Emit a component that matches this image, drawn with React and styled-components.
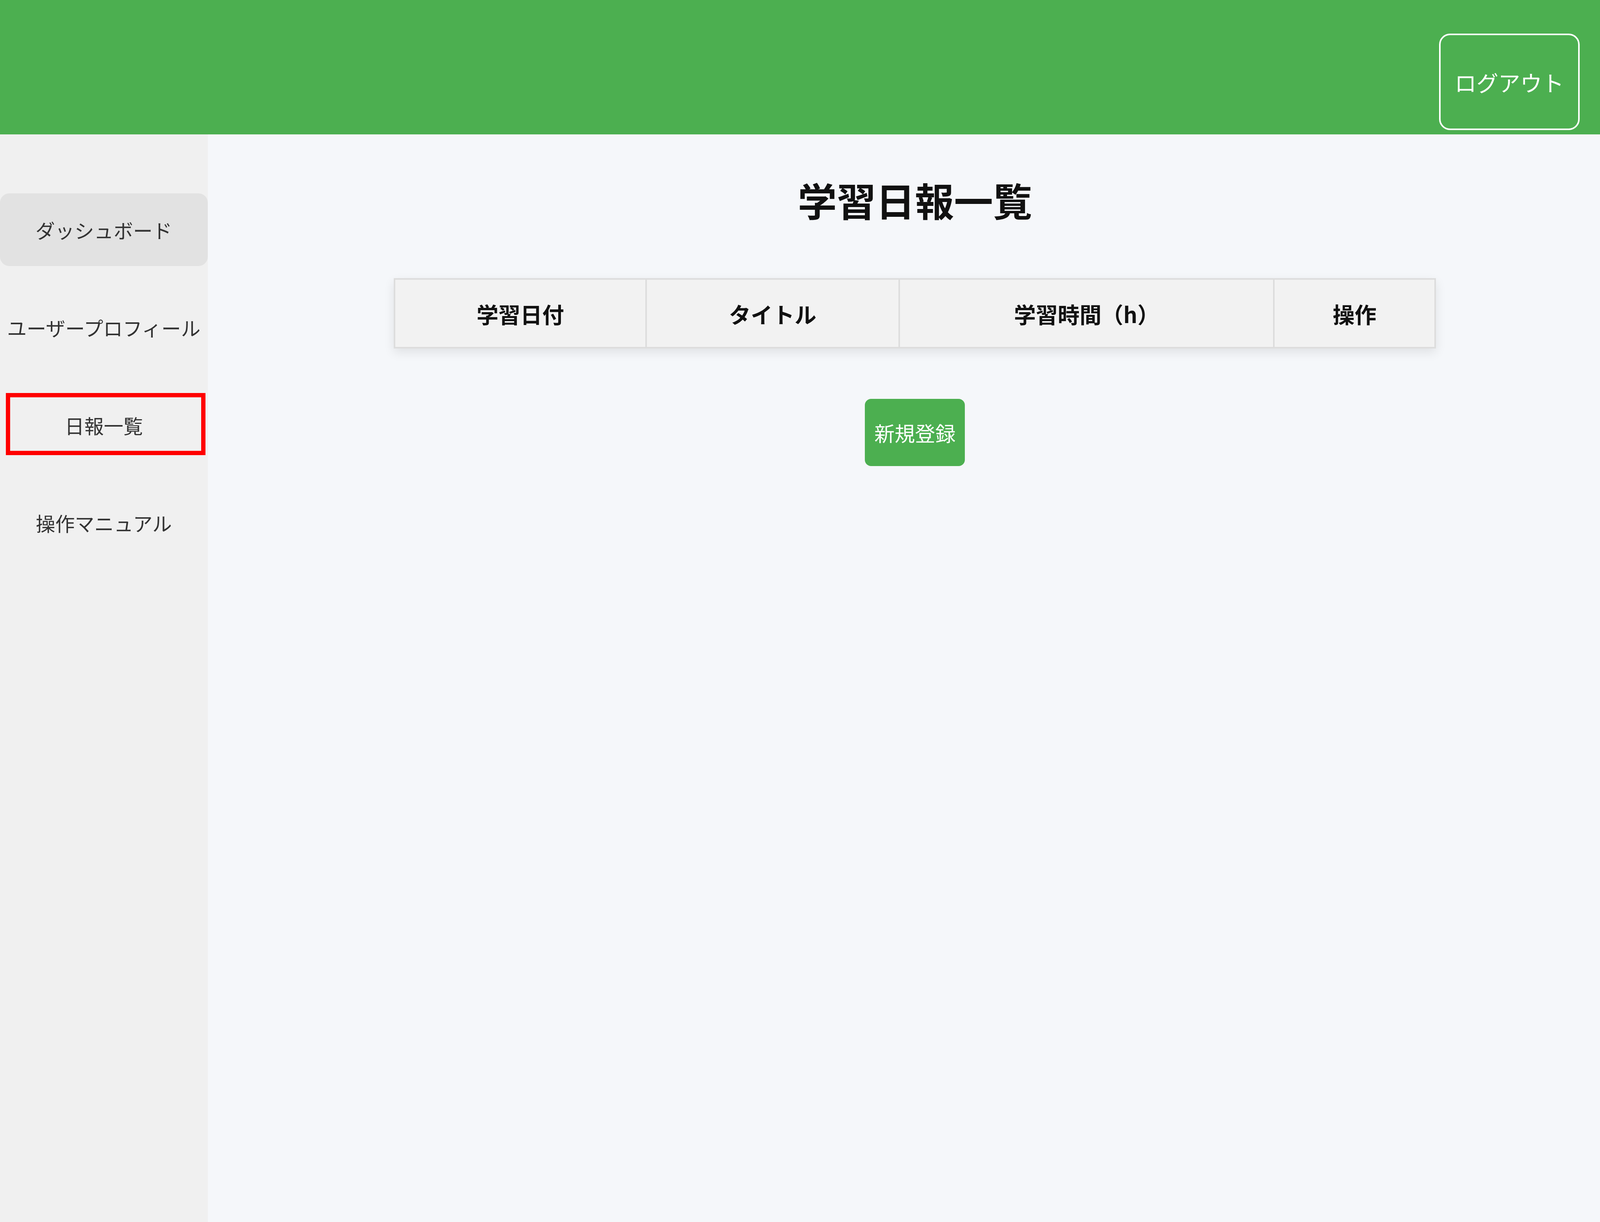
import React from "react";
import styled, { createGlobalStyle } from "styled-components";

/* horizontal sizes follow the 6656px-wide design proportionally */
const vw = (px) => `${((px / 6656) * 100).toFixed(4)}vw`;

const GlobalStyle = createGlobalStyle`
  html, body { margin: 0; padding: 0; }
  body {
    font-family: "Noto Sans CJK JP", "Noto Sans", sans-serif;
    background: #f5f7fa;
    color: #333;
  }
  * { box-sizing: border-box; }
`;

const Page = styled.div`
  width: 100vw;
  height: 100vh;
  display: flex;
  flex-direction: column;
  overflow: hidden;
`;

const Header = styled.header`
  height: 344px;
  flex-shrink: 0;
  background: #4caf50;
  display: flex;
  justify-content: flex-end;
  align-items: flex-start;
  padding: 86px ${vw(85)} 0 0;
`;

const LogoutButton = styled.button`
  width: ${vw(585)};
  height: 247px;
  border: 4px solid #ffffff;
  border-radius: 28px;
  background: transparent;
  color: #ffffff;
  font-family: inherit;
  font-size: 56px;
  padding: 0;
  cursor: pointer;
`;

const Body = styled.div`
  flex: 1;
  display: flex;
  min-height: 0;
`;

const Sidebar = styled.nav`
  width: ${vw(864)};
  flex-shrink: 0;
  background: #f0f0f0;
  padding-top: 151px;
  display: flex;
  flex-direction: column;
  gap: 64px;
`;

const NavItem = styled.div`
  position: relative;
  height: 186px;
  display: flex;
  align-items: center;
  justify-content: center;
  font-size: 50px;
  color: #333;
  white-space: nowrap;
  border-radius: 24px;
  background: ${(p) => (p.$active ? "#e2e2e2" : "transparent")};
  ${(p) =>
    p.$marked &&
    `
    &::after {
      content: "";
      position: absolute;
      left: ${vw(24)};
      right: ${vw(9)};
      top: 11px;
      bottom: 16px;
      border: 11px solid #ff0000;
    }
  `}
`;

const Main = styled.main`
  flex: 1;
  display: flex;
  flex-direction: column;
  align-items: center;
  padding-left: ${vw(92)};
  padding-top: 106px;
`;

const Title = styled.h1`
  margin: 0;
  font-size: 100px;
  line-height: 122px;
  font-weight: 700;
  color: #111;
`;

const Table = styled.table`
  margin-top: 140px;
  width: ${vw(4336)};
  border-collapse: collapse;
  table-layout: fixed;
  box-shadow: 0 10px 26px rgba(0, 0, 0, 0.09);
`;

const Th = styled.th`
  width: ${(p) => p.$w}%;
  height: 176px;
  background: #f2f2f2;
  border: 4px solid #dddddd;
  font-size: 56px;
  font-weight: 700;
  color: #111;
  text-align: center;
  padding: 0;
`;

const NewButton = styled.button`
  margin-top: 129px;
  width: ${vw(416)};
  height: 172px;
  border: none;
  border-radius: 16px;
  background: #4caf50;
  color: #ffffff;
  font-family: inherit;
  font-size: 52px;
  padding: 0;
  cursor: pointer;
`;

const columns = [
  { label: "学習日付", w: 24.17 },
  { label: "タイトル", w: 24.33 },
  { label: "学習時間（h）", w: 36.0 },
  { label: "操作", w: 15.5 },
];

const navItems = [
  { label: "ダッシュボード", active: true },
  { label: "ユーザープロフィール" },
  { label: "日報一覧", marked: true },
  { label: "操作マニュアル" },
];

export default function App() {
  return (
    <>
      <GlobalStyle />
      <Page>
        <Header>
          <LogoutButton>ログアウト</LogoutButton>
        </Header>
        <Body>
          <Sidebar>
            {navItems.map((n) => (
              <NavItem key={n.label} $active={n.active} $marked={n.marked}>
                {n.label}
              </NavItem>
            ))}
          </Sidebar>
          <Main>
            <Title>学習日報一覧</Title>
            <Table>
              <thead>
                <tr>
                  {columns.map((c) => (
                    <Th key={c.label} $w={c.w}>
                      {c.label}
                    </Th>
                  ))}
                </tr>
              </thead>
            </Table>
            <NewButton>新規登録</NewButton>
          </Main>
        </Body>
      </Page>
    </>
  );
}
